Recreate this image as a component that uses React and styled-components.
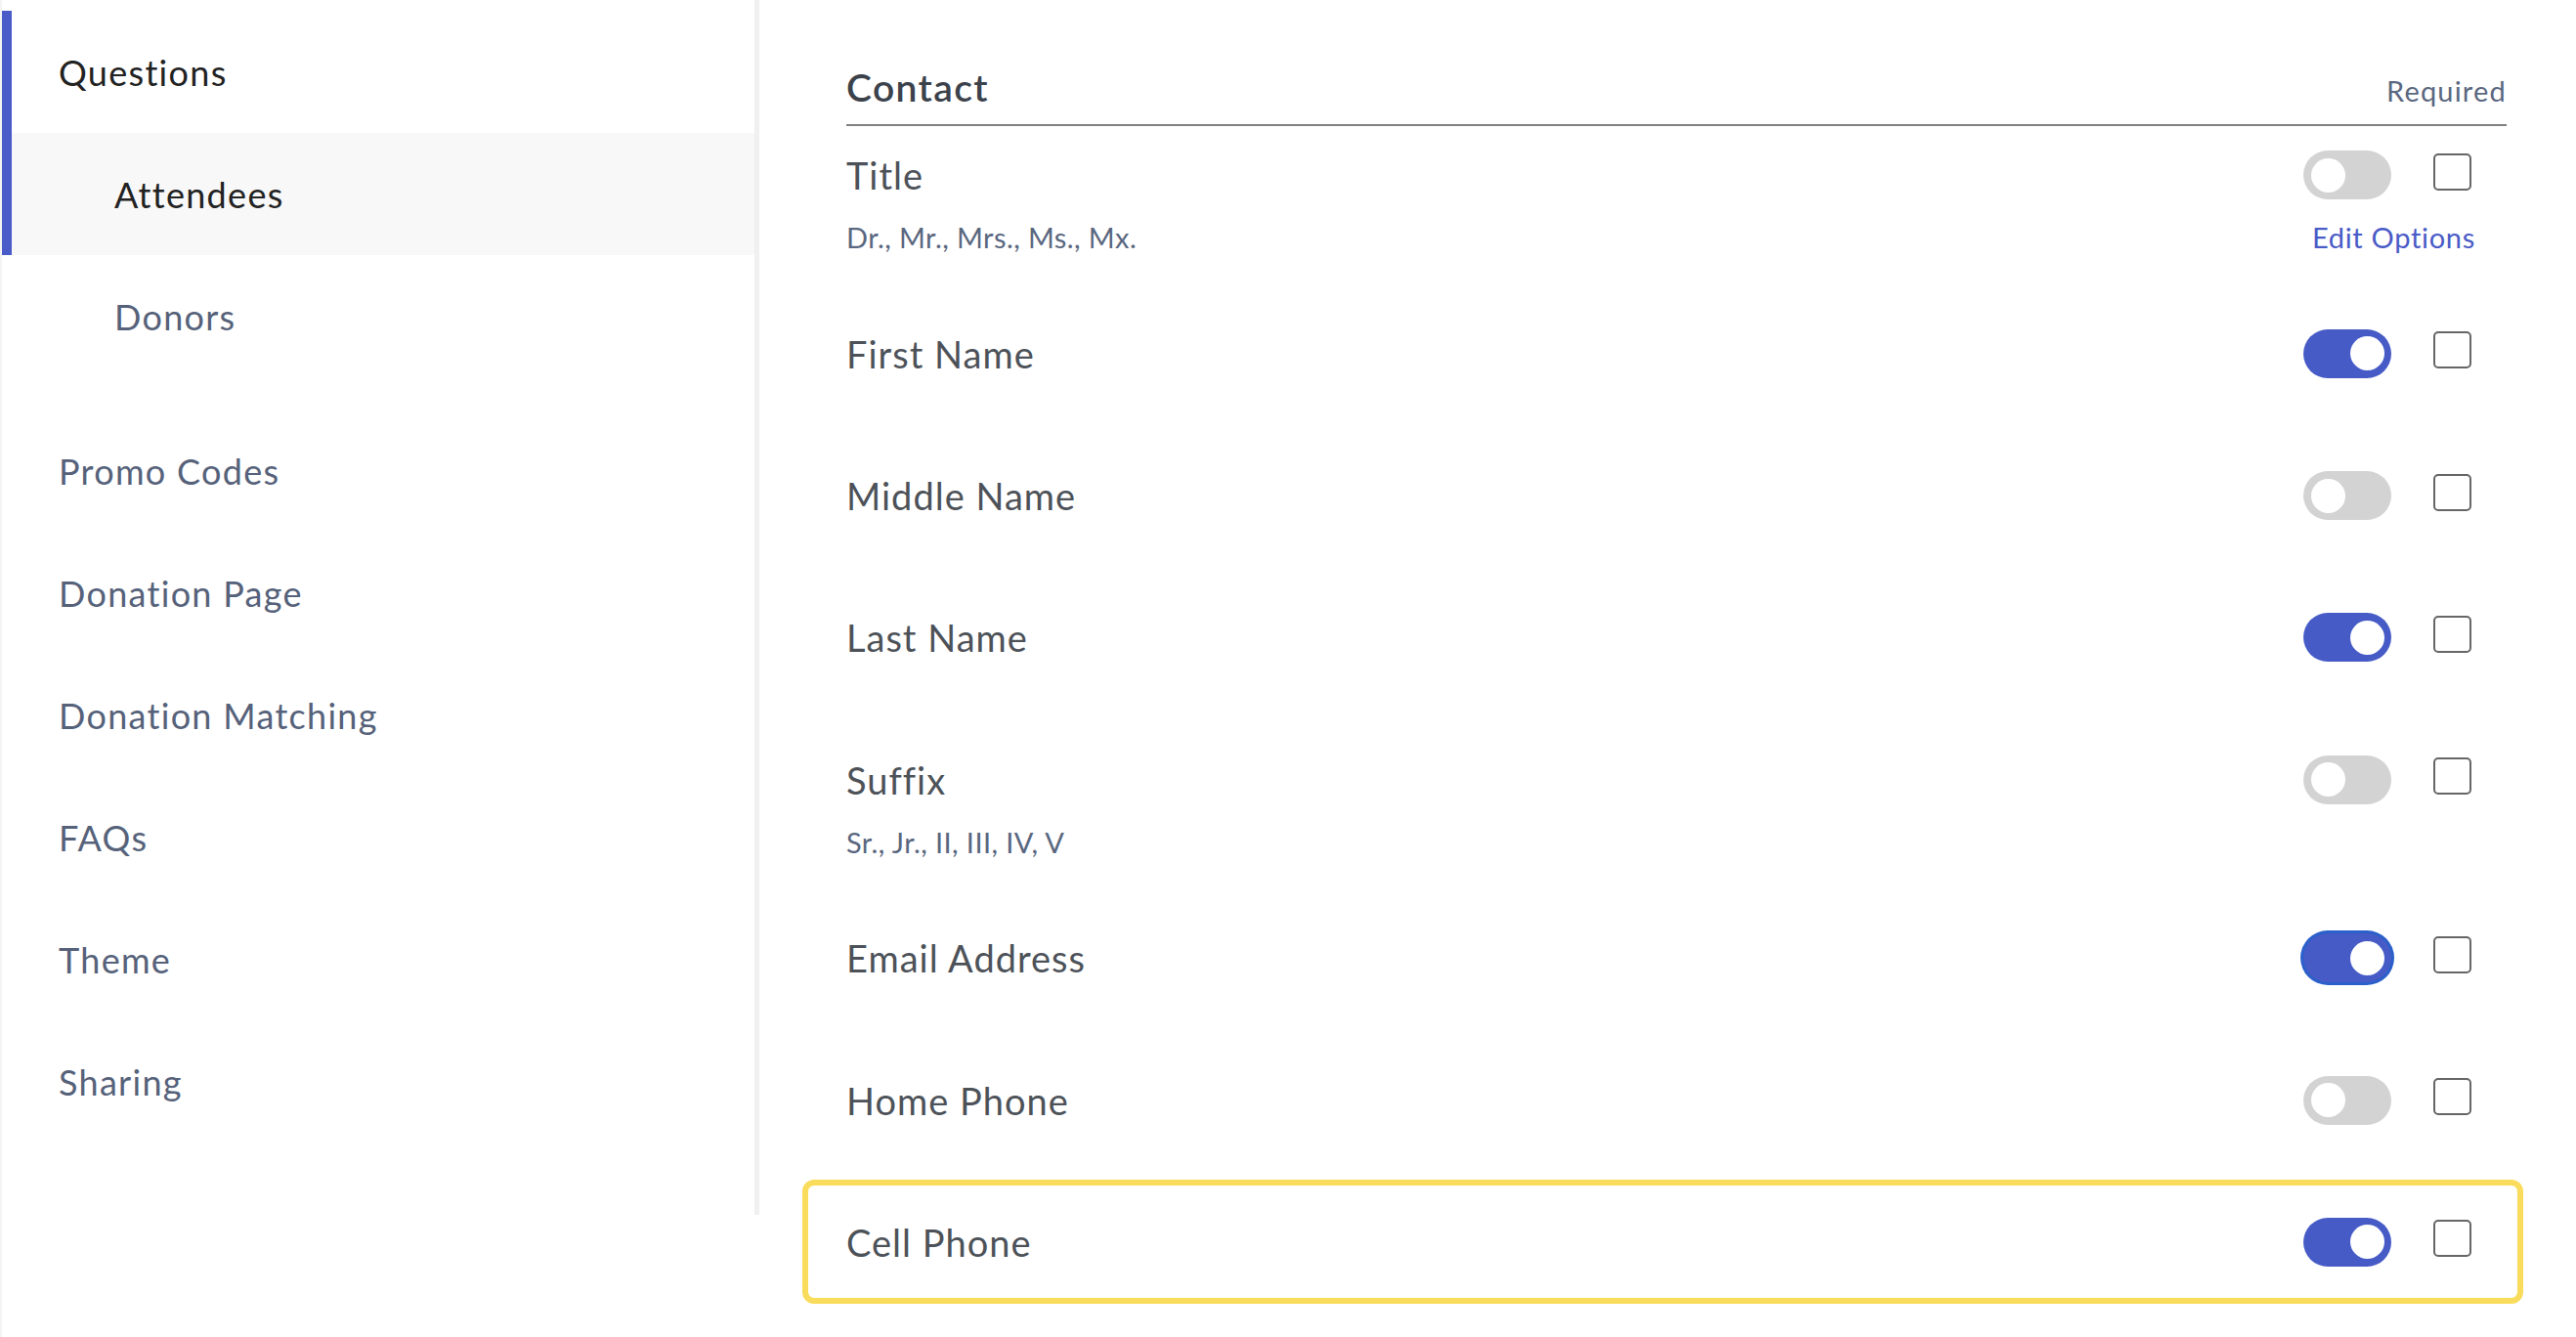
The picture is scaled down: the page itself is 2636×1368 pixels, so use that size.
import React from 'react';
import styled, { createGlobalStyle } from 'styled-components';


const GlobalStyle = createGlobalStyle`
   * {
      box-sizing: border-box;
   }

   body {
      margin: 0;
      background: #ffffff;
      font-family: Lato, "Open Sans", sans-serif;
   }
`;

const Page = styled.div`
   display: flex;
   align-items: flex-start;
   min-height: 1368px;
   border-left: 2px solid #f4f4f4;
`;

const Sidebar = styled.nav`
   width: 775px;
   flex-shrink: 0;
   padding: 11px 0 74px;
   border-right: 5px solid #f0f0f0;
`;

const NavGroup = styled.div`
   margin-bottom: 33px;
`;

const NavItem = styled.div`
   height: 125px;
   display: flex;
   align-items: center;
   font-size: 36px;
   letter-spacing: 1.3px;
   color: ${props => props.dark ? '#222222' : '#56627a'};
   background: ${props => props.active ? '#f8f8f8' : 'transparent'};
   border-left: ${props => props.marked ? '10px solid #4a5cc8' : 'none'};
   padding-left: ${props => (props.sub ? 115 : 58) - (props.marked ? 10 : 0)}px;
`;

const Main = styled.main`
   flex: 1;
   padding: 65px 71px 0 89px;
`;

const Header = styled.div`
   display: flex;
   justify-content: space-between;
   align-items: baseline;
   padding-bottom: 14px;
   border-bottom: 2px solid #808080;
`;

const HeaderTitle = styled.h2`
   margin: 0;
   font-size: 39px;
   line-height: 48px;
   font-weight: 600;
   letter-spacing: 1.4px;
   color: #3c424c;
`;

const HeaderNote = styled.span`
   font-size: 29px;
   letter-spacing: 1.2px;
   color: #5a6780;
`;

const FieldList = styled.div`
   display: flex;
   flex-direction: column;
`;

const Field = styled.div`
   position: relative;
   padding: 47.25px 0 ${props => props.hasSub ? 28.5 : 48}px;

   &:first-child {
      padding-top: 25px;
   }

   ${props => props.highlighted && `
      &::after {
         content: '';
         position: absolute;
         top: 8px;
         bottom: 10px;
         left: -45px;
         right: -17px;
         border: 6px solid #f9dc5c;
         border-radius: 12px;
         pointer-events: none;
      }
   `}
`;

const FieldLine = styled.div`
   display: flex;
   align-items: center;
   padding-right: 36px;
`;

const Label = styled.span`
   flex: 1;
   font-size: 38px;
   line-height: 50px;
   letter-spacing: 1px;
   color: #4d5259;
`;

const Toggle = styled.div`
   width: 90px;
   height: 50px;
   border-radius: 25px;
   padding: 7.5px 7.5px 7.5px 8px;
   display: flex;
   justify-content: ${props => props.on ? 'flex-end' : 'flex-start'};
   background: ${props => props.on ? '#465bc6' : '#d3d3d3'};
   box-shadow: ${props => props.focused ? '0 0 0 3px #2b60ca' : 'none'};
`;

const Knob = styled.span`
   width: 35px;
   height: 35px;
   border-radius: 50%;
   background: #ffffff;
`;

const Checkbox = styled.span`
   width: 39px;
   height: 38px;
   margin-left: 43px;
   margin-bottom: 7px;
   border: 2px solid #666666;
   border-radius: 5px;
`;

const SubLine = styled.div`
   display: flex;
   justify-content: space-between;
   margin-top: 20px;
   padding-right: 32px;
   font-size: 29px;
   line-height: 37px;
`;

const SubText = styled.span`
   color: #5a6780;
   letter-spacing: 0.4px;
`;

const EditLink = styled.a`
   color: #4a5bc7;
   letter-spacing: 0.7px;
   text-decoration: none;
   cursor: pointer;
`;


const fields = [
   { label: 'Title', on: false, sub: 'Dr., Mr., Mrs., Ms., Mx.', edit: true },
   { label: 'First Name', on: true },
   { label: 'Middle Name', on: false },
   { label: 'Last Name', on: true },
   { label: 'Suffix', on: false, sub: 'Sr., Jr., II, III, IV, V' },
   { label: 'Email Address', on: true, focused: true },
   { label: 'Home Phone', on: false },
   { label: 'Cell Phone', on: true, highlighted: true },
];

const navItems = ['Promo Codes', 'Donation Page', 'Donation Matching', 'FAQs', 'Theme', 'Sharing'];


const App = () => {
   return (
      <>
         <GlobalStyle />
         <Page>
            <Sidebar>
               <NavGroup>
                  <NavItem dark marked>Questions</NavItem>
                  <NavItem dark marked active sub>Attendees</NavItem>
                  <NavItem sub>Donors</NavItem>
               </NavGroup>
               {navItems.map(item => (
                  <NavItem key={item}>{item}</NavItem>
               ))}
            </Sidebar>
            <Main>
               <Header>
                  <HeaderTitle>Contact</HeaderTitle>
                  <HeaderNote>Required</HeaderNote>
               </Header>
               <FieldList>
                  {fields.map(f => (
                     <Field key={f.label} hasSub={!!f.sub} highlighted={f.highlighted}>
                        <FieldLine>
                           <Label>{f.label}</Label>
                           <Toggle on={f.on} focused={f.focused}>
                              <Knob />
                           </Toggle>
                           <Checkbox />
                        </FieldLine>
                        {f.sub && (
                           <SubLine>
                              <SubText>{f.sub}</SubText>
                              {f.edit && <EditLink>Edit Options</EditLink>}
                           </SubLine>
                        )}
                     </Field>
                  ))}
               </FieldList>
            </Main>
         </Page>
      </>
   )
}

export default App
